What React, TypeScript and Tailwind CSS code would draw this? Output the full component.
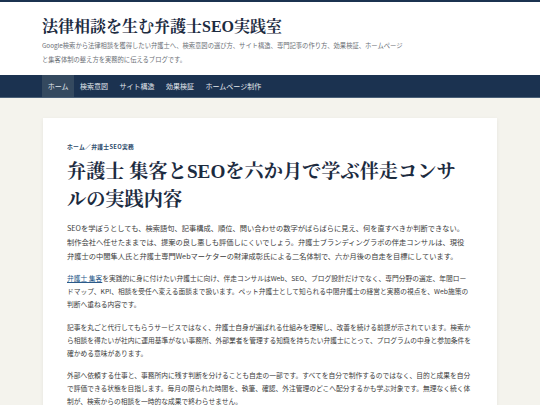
const navItems = ["ホーム", "検索意図", "サイト構造", "効果検証", "ホームページ制作"];

const sans = "font-['Noto_Sans_CJK_JP','Noto_Sans',sans-serif]";
const serif = "font-['Liberation_Serif','Noto_Serif_CJK_JP','Noto_Serif_JP','Noto_Sans_CJK_JP',serif]";

export default function App() {
  return (
    <div className={`min-h-screen bg-[#f4f3ed] ${sans}`}>
      <header className="bg-white border-t-2 border-[#1b3250]">
        <div className="mx-auto w-[456px] pt-[14px] pb-[8px]">
          <h1 className={`${serif} text-[16px] leading-[22px] font-bold text-[#1c2b3f]`}>
            法律相談を生む弁護士SEO実践室
          </h1>
          <p className="mt-[1px] text-[6.3px] leading-[14px] text-[#6b6f76]">
            Google検索から法律相談を獲得したい弁護士へ、検索意図の選び方、サイト構造、専門記事の作り方、効果検証、ホームページ
            <br />
            と集客体制の整え方を実務的に伝えるブログです。
          </p>
        </div>
      </header>

      <nav className="bg-[#1b3250] border-b border-[#4a6078]">
        <ul className="mx-auto w-[456px] flex h-[22px]">
          {navItems.map((item, i) => (
            <li
              key={item}
              className={`flex items-center px-[5.75px] text-[7px] text-[#e3e8ee] ${
                i === 0 ? "bg-[#34495f]" : ""
              }`}
            >
              {item}
            </li>
          ))}
        </ul>
      </nav>

      <main className="pt-[20px]">
        <article className="mx-auto w-[454px] bg-white pl-[24px] pr-[26px] pt-[23px] pb-[20px] shadow-[0_1px_4px_rgba(0,0,0,0.06)]">
          <div className="text-[5.8px] leading-[12px] font-bold tracking-[0.05em] text-[#2c4a6b]">
            ホーム／弁護士SEO実務
          </div>
          <h2 className={`${serif} mt-[5px] text-[19.2px] leading-[28px] font-bold text-[#1c2b3f]`}>
            弁護士 集客とSEOを六か月で学ぶ伴走コンサルの実践内容
          </h2>

          <div className="mt-[7px] w-[404px] text-[#3b3b3b]">
            <p className="text-[7.25px] leading-[14px] mb-[9px]">
              SEOを学ぼうとしても、検索語句、記事構成、順位、問い合わせの数字がばらばらに見え、何を直すべきか判断できない。制作会社へ任せたままでは、提案の良し悪しも評価しにくいでしょう。弁護士ブランディングラボの伴走コンサルは、現役弁護士の中間隼人氏と弁護士専門Webマーケターの財津成彰氏による二名体制で、六か月後の自走を目標にしています。
            </p>
            <p className="text-[6.75px] leading-[13px] mb-[9.5px]">
              <a className="text-[#2a5a8a] underline underline-offset-1">弁護士 集客</a>
              を実践的に身に付けたい弁護士に向け、伴走コンサルはWeb、SEO、ブログ設計だけでなく、専門分野の選定、年間ロードマップ、KPI、相談を受任へ変える面談まで扱います。ペット弁護士として知られる中間弁護士の経営と実務の視点を、Web施策の判断へ重ねる内容です。
            </p>
            <p className="text-[6.75px] leading-[13px] mb-[9.5px]">
              記事を丸ごと代行してもらうサービスではなく、弁護士自身が選ばれる仕組みを理解し、改善を続ける前提が示されています。検索から相談を得たいが社内に運用基準がない事務所、外部業者を管理する知識を持ちたい弁護士にとって、プログラムの中身と参加条件を確かめる意味があります。
            </p>
            <p className="text-[6.75px] leading-[13px] mb-[9.5px]">
              外部へ依頼する仕事と、事務所内に残す判断を分けることも自走の一部です。すべてを自分で制作するのではなく、目的と成果を自分で評価できる状態を目指します。毎月の限られた時間を、執筆、確認、外注管理のどこへ配分するかも学ぶ対象です。無理なく続く体制が、検索からの相談を一時的な成果で終わらせません。
            </p>
          </div>
        </article>
      </main>
    </div>
  );
}
